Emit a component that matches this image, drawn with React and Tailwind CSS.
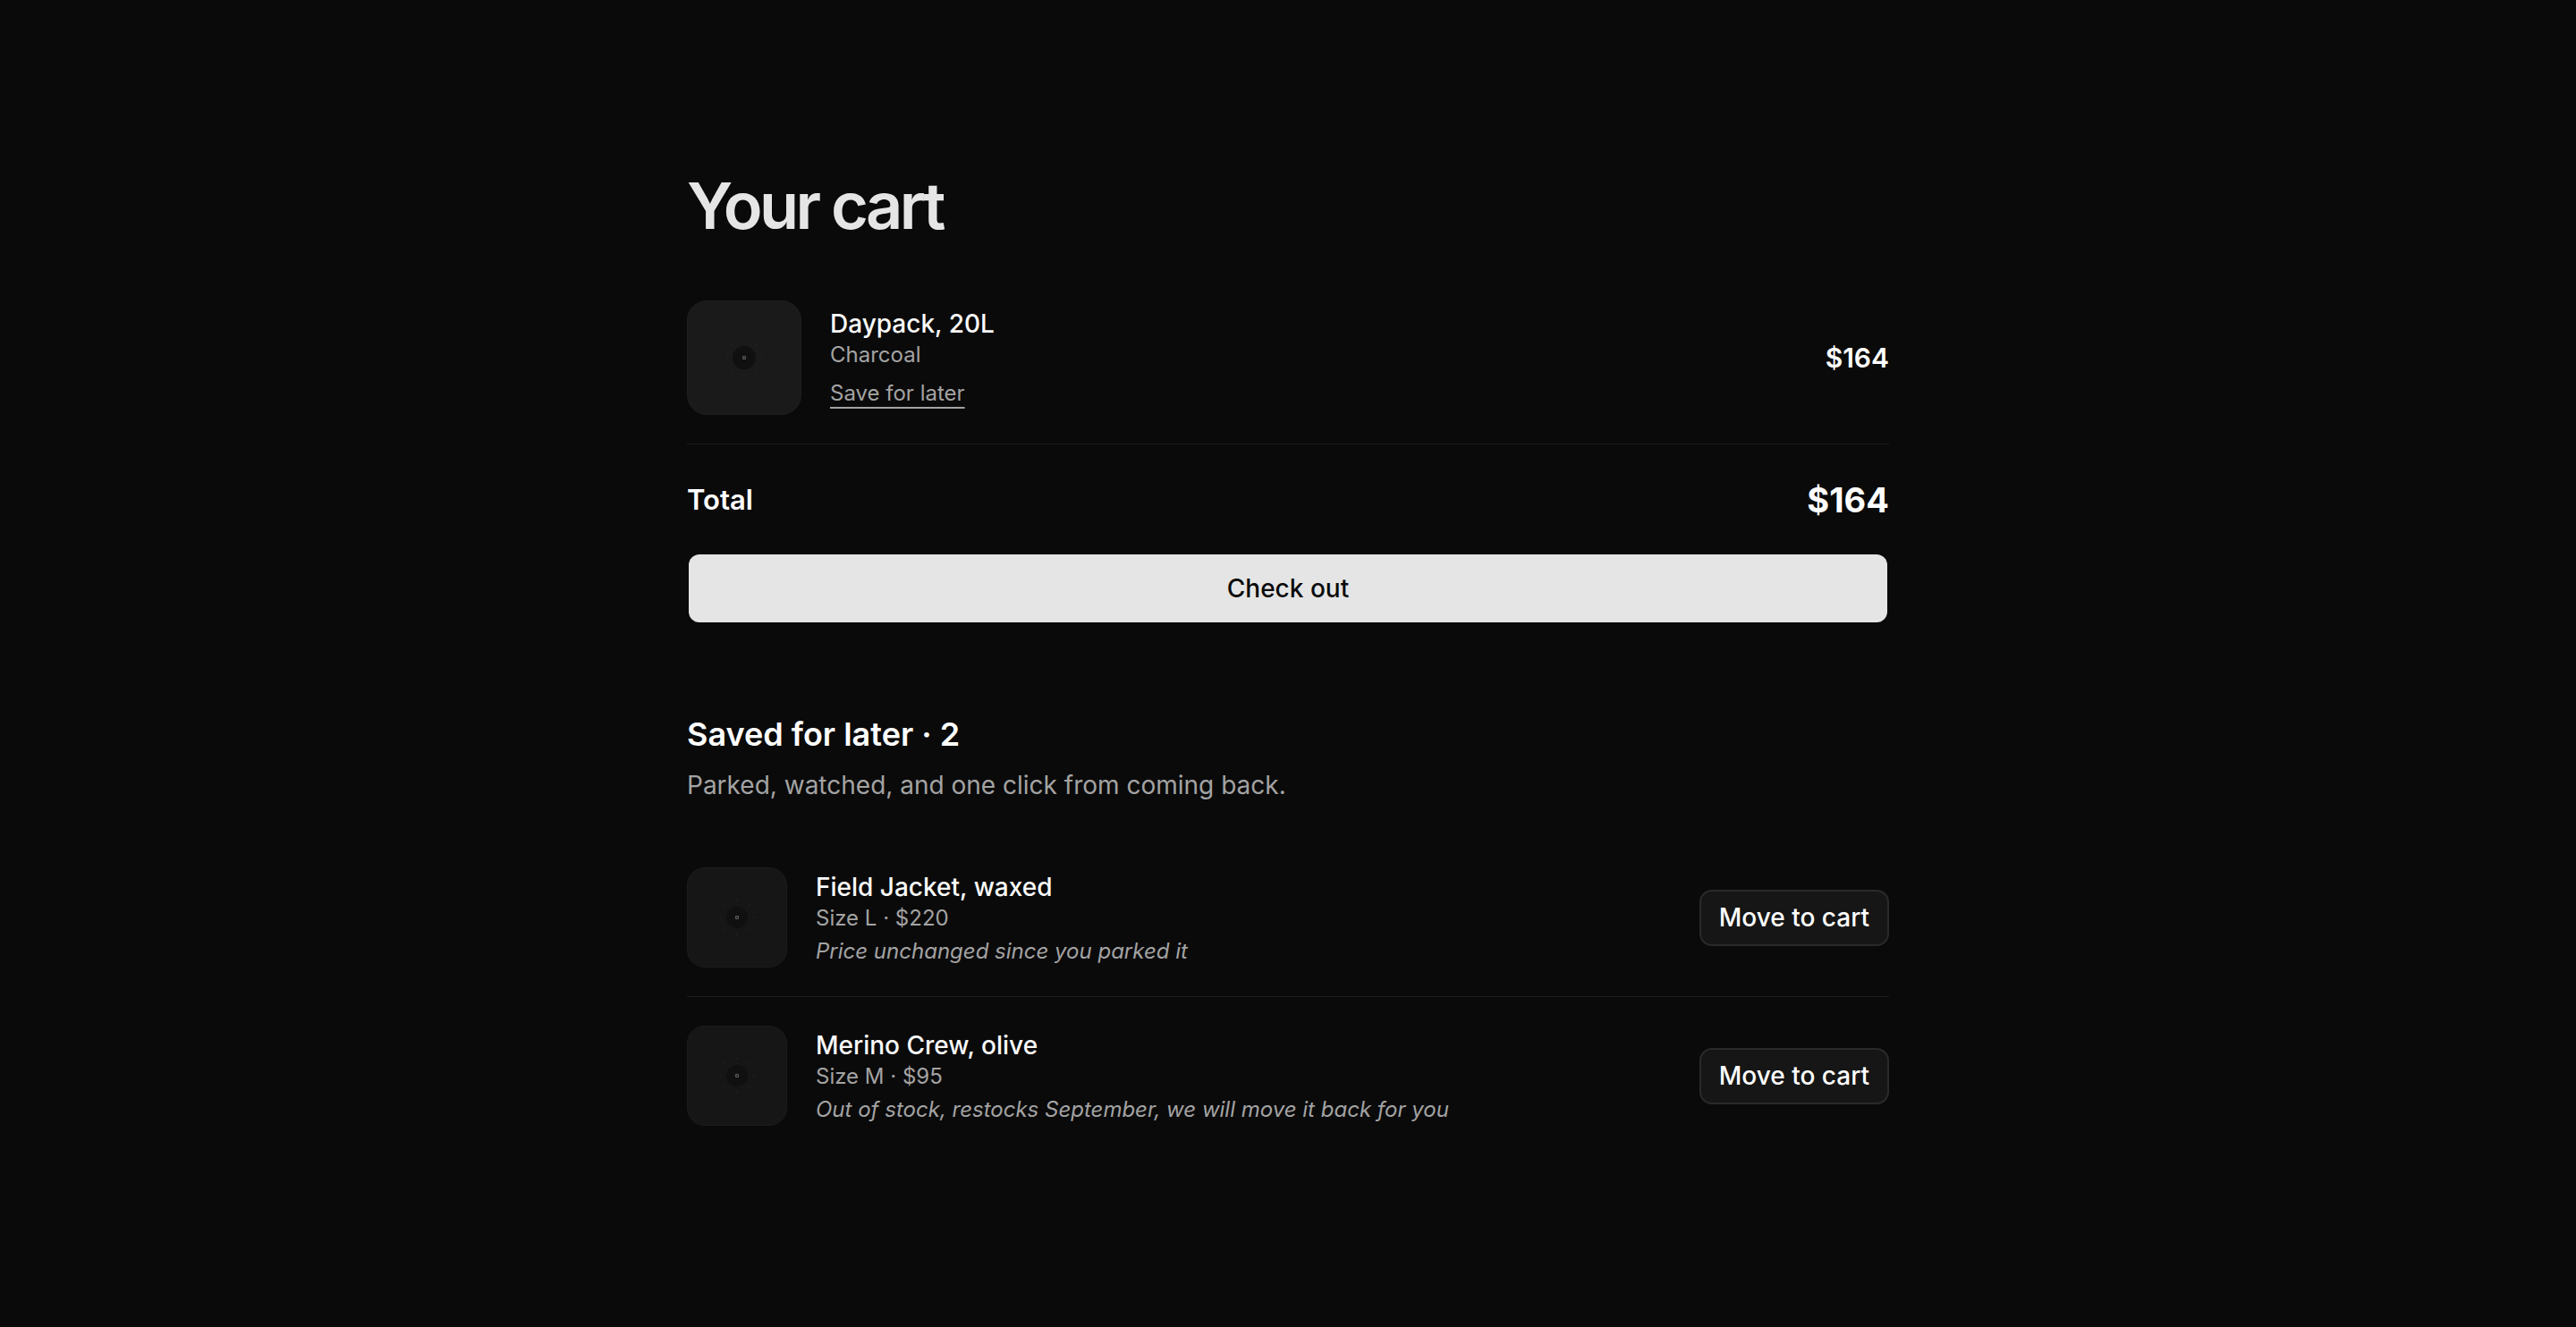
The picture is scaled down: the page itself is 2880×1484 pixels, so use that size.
import React from 'react';

const savedItems = [
  {
    name: 'Field Jacket, waxed',
    meta: 'Size L · $220',
    note: 'Price unchanged since you parked it',
  },
  {
    name: 'Merino Crew, olive',
    meta: 'Size M · $95',
    note: 'Out of stock, restocks September, we will move it back for you',
  },
];

const Placeholder = ({ r = 13 }) => {
  const ticks = [0, 45, 90, 135, 180, 225, 270, 315];
  return (
    <svg width="48" height="48" viewBox="0 0 48 48">
      {ticks.map((a) => (
        <circle
          key={a}
          cx={24 + Math.cos((a * Math.PI) / 180) * 19}
          cy={24 + Math.sin((a * Math.PI) / 180) * 19}
          r="0.8"
          fill="#2a2a2a"
        />
      ))}
      <circle cx="24" cy="24" r={r} fill="#101010" />
      <rect x="22" y="22" width="4" height="4" rx="1" fill="#5a5a5a" />
      <rect x="23" y="23" width="2" height="2" fill="#2c2c2c" />
    </svg>
  );
};

const App = () => {
  return (
    <div className="min-h-screen bg-[#0a0a0a] font-['Inter',sans-serif] text-white">
      <div className="mx-auto max-w-[1344px] pt-[194px] pb-40">
        {/* Cart */}
        <h1 className="text-[72px] leading-none font-semibold tracking-[-0.05em] text-[#e5e5e5]">
          Your cart
        </h1>

        <div className="mt-[38px] flex items-center border-b border-[#1c1c1c] py-8">
          <div className="flex h-32 w-32 shrink-0 items-center justify-center rounded-[22px] border border-[#1e1e1e] bg-[#1a1a1a]">
            <Placeholder />
          </div>
          <div className="ml-8 flex-1">
            <p className="text-[28px] leading-[36px] font-medium text-[#fafafa]">Daypack, 20L</p>
            <p className="text-[24px] leading-[34px] text-[#a3a3a3]">Charcoal</p>
            <button className="mt-[10px] text-[24px] leading-[32px] text-[#a3a3a3] underline decoration-2 underline-offset-[7px]">
              Save for later
            </button>
          </div>
          <p className="text-[30px] font-semibold text-white">$164</p>
        </div>

        <div className="mt-10 flex h-11 items-center justify-between">
          <span className="text-[31px] font-semibold text-white">Total</span>
          <span className="text-[38px] font-bold text-white">$164</span>
        </div>

        <button className="mx-[2px] mt-[39px] flex h-[76px] w-[1340px] items-center justify-center rounded-xl bg-[#e5e5e5] text-[28px] font-medium text-[#0a0a0a]">
          Check out
        </button>

        {/* Saved for later */}
        <h2 className="mt-[103px] text-[36px] leading-[44px] font-semibold text-white">
          Saved for later · 2
        </h2>
        <p className="mt-4 text-[28px] leading-[38px] text-[#a3a3a3]">
          Parked, watched, and one click from coming back.
        </p>

        <div className="mt-[41px]">
          {savedItems.map((item, i) => (
            <div
              key={item.name}
              className={`flex items-center py-8 ${i === 0 ? 'border-b border-[#1c1c1c]' : ''}`}
            >
              <div className="flex h-28 w-28 shrink-0 items-center justify-center rounded-[20px] border border-[#1c1c1c] bg-[#161616]">
                <Placeholder r={12} />
              </div>
              <div className="ml-8 flex-1 pt-[4px]">
                <p className="text-[28px] leading-[36px] font-medium text-[#fafafa]">{item.name}</p>
                <p className="text-[24px] leading-[34px] text-[#a3a3a3]">{item.meta}</p>
                <p className="mt-[2px] text-[24px] leading-[36px] italic text-[#a3a3a3]">{item.note}</p>
              </div>
              <button className="h-[63px] rounded-[14px] border-2 border-[#2a2a2a] bg-[#161616] px-[20px] text-[28px] font-medium text-white">
                Move to cart
              </button>
            </div>
          ))}
        </div>
      </div>
    </div>
  );
};

export default App;
